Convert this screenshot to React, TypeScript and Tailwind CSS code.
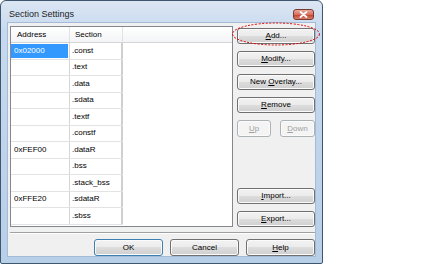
import React from 'react'

const rows = [
  { address: '0x02000', section: '.const', selected: true },
  { address: '', section: '.text' },
  { address: '', section: '.data' },
  { address: '', section: '.sdata' },
  { address: '', section: '.textf' },
  { address: '', section: '.constf' },
  { address: '0xFEF00', section: '.dataR' },
  { address: '', section: '.bss' },
  { address: '', section: '.stack_bss' },
  { address: '0xFFE20', section: '.sdataR' },
  { address: '', section: '.sbss' },
]

function Btn({
  children,
  className = '',
  disabled = false,
  isDefault = false,
}: {
  children: React.ReactNode
  className?: string
  disabled?: boolean
  isDefault?: boolean
}) {
  const border = isDefault
    ? 'border-[#3c7fb1]'
    : disabled
      ? 'border-[#adb2b5]'
      : 'border-[#707070]'
  const face = disabled
    ? 'bg-[#f4f4f4] text-[#a0a0a0]'
    : 'bg-[linear-gradient(#f2f2f2_0%,#ebebeb_50%,#dddddd_50%,#cfcfcf_100%)] text-black'
  return (
    <div
      className={`flex items-center justify-center rounded-[3px] border ${border} ${face} shadow-[inset_0_0_0_1px_#fbfbfb] text-[8px] leading-none ${className}`}
    >
      {children}
    </div>
  )
}

function Key({ children }: { children: React.ReactNode }) {
  return <span className="underline underline-offset-[1px]">{children}</span>
}

export default function App() {
  return (
    <div className="relative w-[434px] h-[268px] bg-white font-['Liberation_Sans',Arial,sans-serif] text-black">
      {/* Window frame */}
      <div className="flex flex-col w-[323px] h-[264px] border border-[#40566e] rounded-t-[6px] rounded-b-[2px] bg-[linear-gradient(#dbe6f3_0%,#c6d9ee_12%,#b8cfe8_100%)] px-[6px] pb-[6px]">
        {/* Title bar */}
        <div className="flex items-center justify-between h-[21px] pt-[5px] pl-[2px] pr-[2px]">
          <span className="text-[9px] leading-none text-[#1e1e1e]">Section Settings</span>
          <div className="flex items-center justify-center w-[21px] h-[11px] rounded-[3px] border border-[#7a3a30] bg-[linear-gradient(#e9a99c_0%,#d7705f_50%,#c4412d_55%,#d8826f_100%)]">
            <svg width="9" height="7" viewBox="0 0 9 7">
              <path d="M1.5 1 L7.5 6 M7.5 1 L1.5 6" stroke="#fff" strokeWidth="1.8" strokeLinecap="round" />
            </svg>
          </div>
        </div>

        {/* Client area */}
        <div className="flex flex-col flex-1 bg-[#f0f0f0] border border-[#a3bbd6]">
          <div className="flex pl-[2px] pt-[3px]">
            {/* List view */}
            <div className="flex flex-col w-[223px] h-[201px] border border-[#828790] bg-white">
              <div className="flex h-[16px] bg-[linear-gradient(#ffffff,#f3f4f6)] border-b border-[#d5d5d5] text-[8px] leading-none">
                <div className="flex items-center w-[59px] border-r border-[#e2e2e2] pl-[6px]">Address</div>
                <div className="flex items-center w-[53px] border-r border-[#e2e2e2] pl-[5px]">Section</div>
              </div>
              <div className="flex flex-col w-[112px] text-[8px] leading-none">
                {rows.map((r, i) => (
                  <div key={i} className="flex h-[16.5px] border-b border-[#e3e3e3]">
                    <div className="flex w-[59px] border-r border-[#d6d6d6] py-[1px] pr-[1px]">
                      <div
                        className={`flex items-center flex-1 pl-[3px] ${r.selected ? 'bg-[#3399ff] text-white' : ''}`}
                      >
                        {r.address}
                      </div>
                    </div>
                    <div className="flex items-center w-[53px] border-r-2 border-[#cfcfcf] pl-[2px]">{r.section}</div>
                  </div>
                ))}
              </div>
            </div>

            {/* Side buttons */}
            <div className="flex flex-col w-[78px] ml-[4px] pt-[2px] gap-[7px]">
              <Btn className="h-[16px]"><span><Key>A</Key>dd...</span></Btn>
              <Btn className="h-[16px]"><span><Key>M</Key>odify...</span></Btn>
              <Btn className="h-[16px]"><span>New <Key>O</Key>verlay...</span></Btn>
              <Btn className="h-[16px]"><span><Key>R</Key>emove</span></Btn>
              <div className="flex justify-between">
                <Btn disabled className="h-[17px] w-[34px]"><span><Key>U</Key>p</span></Btn>
                <Btn disabled className="h-[17px] w-[35px]"><span><Key>D</Key>own</span></Btn>
              </div>
              <Btn className="h-[16px] mt-auto"><span><Key>I</Key>mport...</span></Btn>
              <Btn className="h-[16px]"><span><Key>E</Key>xport...</span></Btn>
            </div>
          </div>

          {/* Separator */}
          <div className="ml-[2px] mr-[0px] mt-[5px] h-[2px] border-t border-[#a0a0a0] border-b border-b-white" />

          {/* Bottom buttons */}
          <div className="flex justify-end gap-[7px] mt-[5px]">
            <Btn isDefault className="w-[69px] h-[17px]">OK</Btn>
            <Btn className="w-[69px] h-[17px]">Cancel</Btn>
            <Btn className="w-[69px] h-[17px]"><span><Key>H</Key>elp</span></Btn>
          </div>
        </div>
      </div>

      {/* Red annotation ellipse around Add */}
      <svg className="absolute left-[231px] top-[22px]" width="90" height="24" viewBox="0 0 90 24">
        <ellipse cx="45" cy="12" rx="43.5" ry="11" fill="none" stroke="#e00000" strokeWidth="1" strokeDasharray="2 1.5" />
      </svg>
    </div>
  )
}
